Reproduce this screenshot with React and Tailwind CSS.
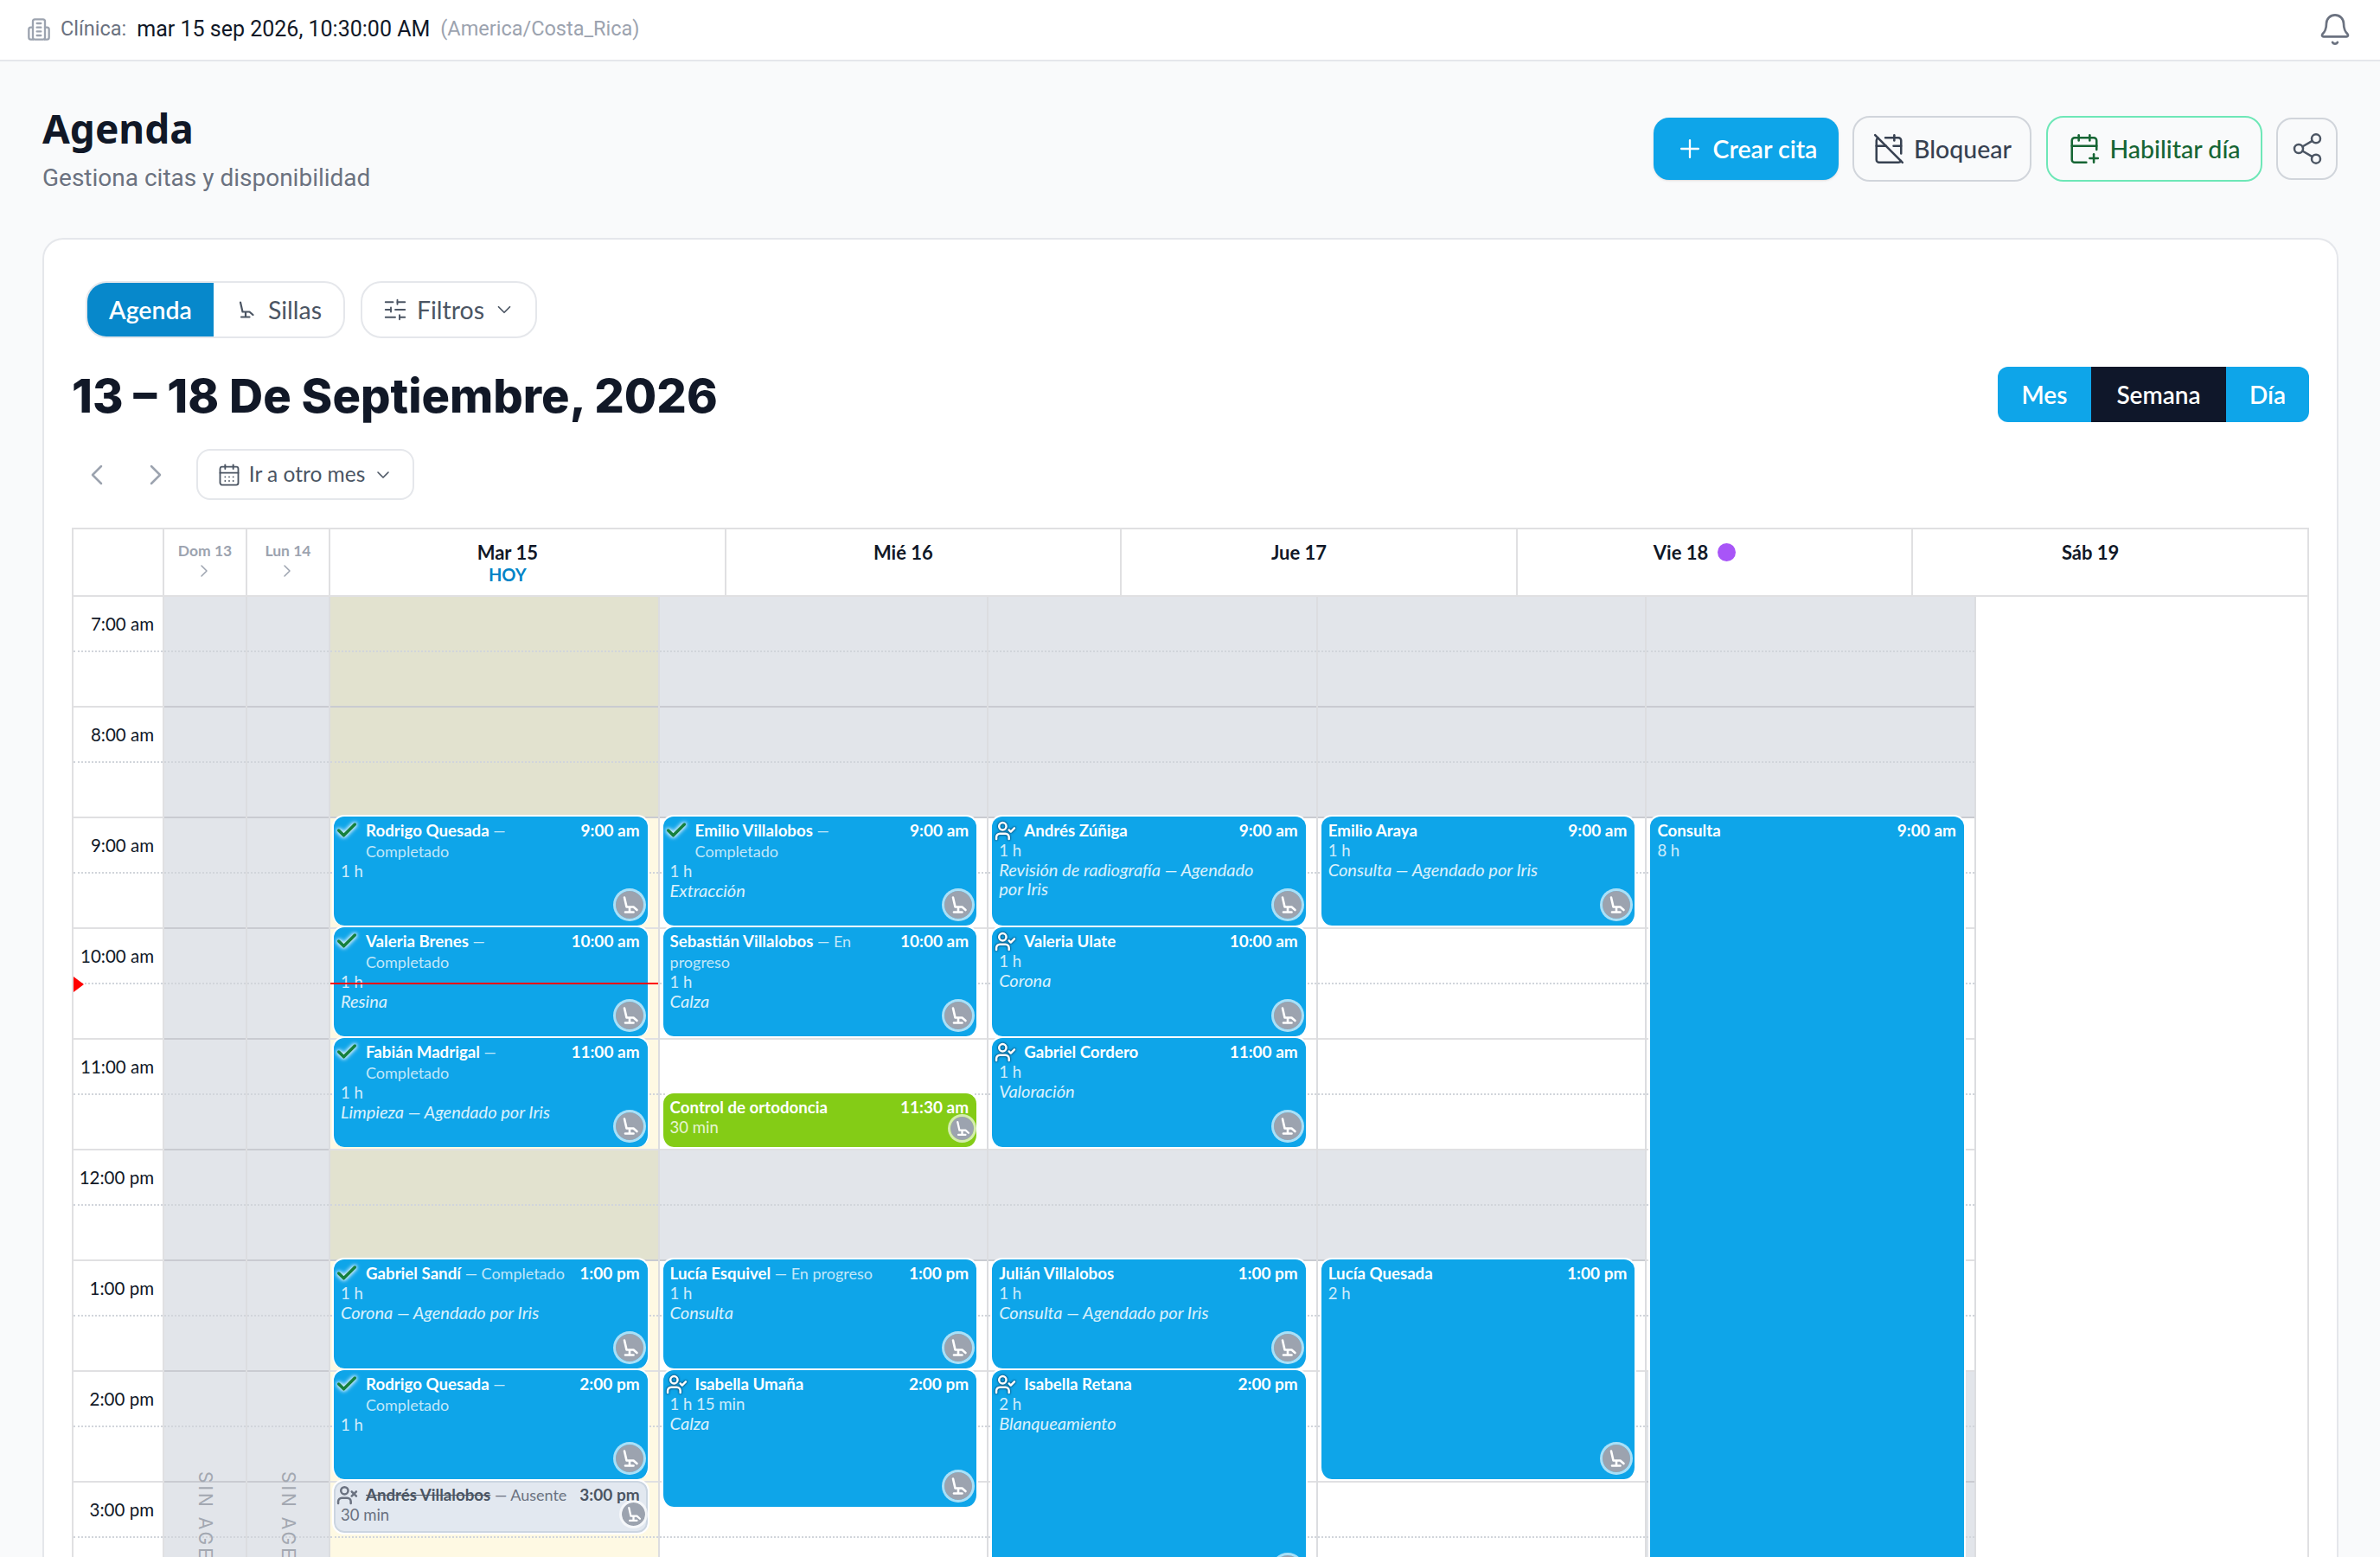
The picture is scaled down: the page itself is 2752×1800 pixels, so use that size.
import React from "react";
import { Bell, Plus, CalendarOff, CalendarPlus, Share2, SlidersHorizontal, ChevronDown, ChevronLeft, ChevronRight, CalendarDays, Check, UserCheck, UserX } from "lucide-react";

const ChairIcon = ({ className, strokeWidth = 2.2 }) => (
  <svg viewBox="0 0 24 24" fill="none" stroke="currentColor" strokeWidth={strokeWidth} strokeLinecap="round" strokeLinejoin="round" className={className}>
    <path d="M6 3.5 8.5 14.5H16.5L20.5 18" />
    <path d="M12 15V20" />
    <path d="M7 20.5H16.5" />
  </svg>
);

const BuildingIcon = ({ className }) => (
  <svg viewBox="0 0 24 24" fill="none" stroke="currentColor" strokeWidth="2" strokeLinecap="round" strokeLinejoin="round" className={className}>
    <rect x="6" y="2" width="12" height="20" rx="2" />
    <path d="M6 10H4a2 2 0 0 0-2 2v8a2 2 0 0 0 2 2h2" />
    <path d="M18 10h2a2 2 0 0 1 2 2v8a2 2 0 0 1-2 2h-2" />
    <path d="M10 6h4M10 10h4M10 14h4M10 18h4" />
  </svg>
);

const HOUR = 128;
const hours = ["7:00 am", "8:00 am", "9:00 am", "10:00 am", "11:00 am", "12:00 pm", "1:00 pm", "2:00 pm", "3:00 pm", "4:00 pm"];

const days = [
  {
    closed: [0, 1, 5],
    closedBg: "bg-[#e2e2cf]",
    openBg: "bg-[#fef9e3]",
    events: [
      { at: 2, len: 1, name: "Rodrigo Quesada", status: "Completado", time: "9:00 am", dur: "1 h", icon: "check" },
      { at: 3, len: 1, name: "Valeria Brenes", status: "Completado", time: "10:00 am", dur: "1 h", note: "Resina", icon: "check" },
      { at: 4, len: 1, name: "Fabián Madrigal", status: "Completado", time: "11:00 am", dur: "1 h", note: "Limpieza — Agendado por Iris", icon: "check" },
      { at: 6, len: 1, name: "Gabriel Sandí", status: "Completado", time: "1:00 pm", dur: "1 h", note: "Corona — Agendado por Iris", icon: "check" },
      { at: 7, len: 1, name: "Rodrigo Quesada", status: "Completado", time: "2:00 pm", dur: "1 h", icon: "check" },
      { at: 8, len: 0.5, name: "Andrés Villalobos", status: "Ausente", time: "3:00 pm", dur: "30 min", icon: "absent", kind: "absent", small: true },
    ],
  },
  {
    closed: [0, 1, 5],
    events: [
      { at: 2, len: 1, name: "Emilio Villalobos", status: "Completado", time: "9:00 am", dur: "1 h", note: "Extracción", icon: "check" },
      { at: 3, len: 1, name: "Sebastián Villalobos", status: "En progreso", time: "10:00 am", dur: "1 h", note: "Calza" },
      { at: 4.5, len: 0.5, name: "Control de ortodoncia", time: "11:30 am", dur: "30 min", kind: "green", small: true },
      { at: 6, len: 1, name: "Lucía Esquivel", status: "En progreso", time: "1:00 pm", dur: "1 h", note: "Consulta" },
      { at: 7, len: 1.25, name: "Isabella Umaña", time: "2:00 pm", dur: "1 h 15 min", note: "Calza", icon: "user" },
    ],
  },
  {
    closed: [0, 1, 5],
    events: [
      { at: 2, len: 1, name: "Andrés Zúñiga", time: "9:00 am", dur: "1 h", note: "Revisión de radiografía — Agendado por Iris", icon: "user" },
      { at: 3, len: 1, name: "Valeria Ulate", time: "10:00 am", dur: "1 h", note: "Corona", icon: "user" },
      { at: 4, len: 1, name: "Gabriel Cordero", time: "11:00 am", dur: "1 h", note: "Valoración", icon: "user" },
      { at: 6, len: 1, name: "Julián Villalobos", time: "1:00 pm", dur: "1 h", note: "Consulta — Agendado por Iris" },
      { at: 7, len: 2, name: "Isabella Retana", time: "2:00 pm", dur: "2 h", note: "Blanqueamiento", icon: "user" },
    ],
  },
  {
    closed: [0, 1, 5],
    events: [
      { at: 2, len: 1, name: "Emilio Araya", time: "9:00 am", dur: "1 h", note: "Consulta — Agendado por Iris" },
      { at: 6, len: 2, name: "Lucía Quesada", time: "1:00 pm", dur: "2 h" },
    ],
  },
  {
    closed: [0, 1, 7, 8, 9],
    events: [{ at: 2, len: 8, name: "Consulta", time: "9:00 am", dur: "8 h", noChair: true }],
  },
];

function HourCell({ closed, closedBg = "bg-[#e2e5ea]", openBg = "bg-white" }) {
  const lineHour = closed ? "border-[#c9cbd1]" : "border-[#e0e0e2]";
  return (
    <div className={`h-[128px] border-b-2 ${lineHour} ${closed ? closedBg : openBg}`}>
      <div className="h-[64px] border-b-2 border-dotted border-[#d1d5db]" />
    </div>
  );
}

function EventCard({ e }) {
  const top = e.at * HOUR - 4;
  const height = e.len * HOUR;
  const isAbsent = e.kind === "absent";
  const bg = e.kind === "green" ? "bg-[#84cc16]" : isAbsent ? "bg-[#e2e8f0]" : "bg-[#0ea5e9]";
  return (
    <div
      className={`absolute left-[2px] right-[10px] z-10 rounded-[14px] border-x-2 border-t-2 border-white pl-[8px] pr-[9px] pt-[4px] text-[18.5px] leading-[22px] ${bg} ${isAbsent ? "border-b-2 shadow-[inset_0_0_0_2px_#cbd5e1] text-[#6b7280]" : "text-white"}`}
      style={{ top, height }}
    >
      <div className="flex items-start">
        {e.icon === "check" && (
          <span className="-ml-[4px] mr-[11px] h-[22px] w-[22px] shrink-0">
            <Check className="-ml-[3px] -mt-[2px] h-[28px] w-[28px] text-[#15803d] [filter:drop-shadow(0_0_2px_#e0f2fe)_drop-shadow(0_0_2px_#e0f2fe)]" strokeWidth={3} />
          </span>
        )}
        {e.icon === "user" && (
          <span className="-ml-[4px] mr-[11px] h-[22px] w-[22px] shrink-0">
            <UserCheck className="-ml-[1px] h-[25px] w-[25px] text-white [filter:drop-shadow(0_0_1px_#0c4a6e)_drop-shadow(0_0_1px_#0369a1)]" strokeWidth={2.4} />
          </span>
        )}
        {e.icon === "absent" && (
          <span className="-ml-[4px] mr-[11px] h-[22px] w-[22px] shrink-0">
            <UserX className="-ml-[1px] h-[25px] w-[25px] text-[#6b7280]" strokeWidth={2.4} />
          </span>
        )}
        <div className="min-w-0 flex-1 text-[18.7px] leading-[24px]">
          <span className={`font-bold ${isAbsent ? "text-[#4b5563] line-through" : "text-white"}`}>{e.name}</span>
          {e.status && <span className={`text-[18px] ${isAbsent ? "text-[#6b7280]" : "text-white/75"}`}> — {e.status}</span>}
        </div>
        <div className={`ml-2 shrink-0 text-[19px] font-bold leading-[24px] ${isAbsent ? "text-[#4b5563]" : "text-white"}`}>{e.time}</div>
      </div>
      <div className={isAbsent ? "text-[#6b7280]" : "text-white/80"}>{e.dur}</div>
      {e.note && <div className="pr-[24px] text-[20px] italic text-white/85">{e.note}</div>}
      {!e.noChair && (
        <div className={`absolute flex items-center justify-center rounded-full border-[3px] border-white/65 bg-[#9ca3af] bg-clip-padding text-white ${e.small ? "bottom-[5px] right-[0px] h-[33px] w-[33px]" : "bottom-[5px] right-[2px] h-[38px] w-[38px]"}`}>
          <ChairIcon strokeWidth={2.6} className={e.small ? "h-[21px] w-[21px]" : "h-[24px] w-[24px]"} />
        </div>
      )}
    </div>
  );
}

function DayColumn({ day, children }) {
  return (
    <div className="relative w-[380.6px] border-r-2 border-[#dcdde0]">
      {hours.map((h, i) => (
        <HourCell key={h} closed={day.closed.includes(i)} closedBg={day.closedBg} openBg={day.openBg} />
      ))}
      {day.events.map((e) => (
        <EventCard key={e.name + e.time} e={e} />
      ))}
      {children}
    </div>
  );
}

function SideColumn({ label }) {
  return (
    <div className="relative w-[96px] border-r-2 border-[#dcdde0]">
      {hours.map((h) => (
        <HourCell key={h} closed />
      ))}
      <div className="absolute left-0 right-0 top-[1011px] flex justify-center">
        <span className="font-['Inter'] text-[21px] leading-none tracking-[3px] text-[#a3a8b1] [writing-mode:vertical-rl]">{label}</span>
      </div>
    </div>
  );
}

function HeaderDay({ label, sub, dot }) {
  return (
    <div className="flex flex-1 flex-col items-center border-r-2 border-[#e0e0e2] pr-[46px] pt-[13px] last:border-r-0">
      <div className="flex items-center text-[22px] font-bold leading-[27px] text-[#111827]">
        {label}
        {dot && <span className="ml-[11px] h-[21px] w-[21px] rounded-full bg-[#a855f7]" />}
      </div>
      {sub && <div className="text-[20px] font-bold leading-[25px] text-[#0284c7]">{sub}</div>}
    </div>
  );
}

function SideHeader({ label }) {
  return (
    <div className="flex w-[96px] flex-col items-center border-r-2 border-[#e0e0e2] pt-[14px] text-[#9ca3af]">
      <div className="text-[17.5px] font-bold leading-[22px]">{label}</div>
      <ChevronRight className="-ml-[3px] h-[24px] w-[24px]" strokeWidth={1.5} />
    </div>
  );
}

export default function App() {
  return (
    <div className="flex h-screen flex-col overflow-hidden bg-[#f9fafb] font-['Lato',sans-serif] text-[#111827]">
      <header className="flex h-[71px] shrink-0 items-center justify-between border-b-2 border-[#e5e7eb] bg-white pb-[2px] pl-[31px] pr-[32px] font-['Roboto',sans-serif]">
        <div className="flex items-center">
          <BuildingIcon className="mr-[11px] h-[28px] w-[28px] text-[#9ca3af]" />
          <span className="text-[23.5px] text-[#6b7280]">Clínica:</span>
          <span className="ml-[12px] text-[25px] text-[#111827]">mar 15 sep 2026, 10:30:00 AM</span>
          <span className="ml-[12px] text-[23.5px] text-[#9ca3af]">(America/Costa_Rica)</span>
        </div>
        <Bell className="h-[40px] w-[40px] text-[#6b7280]" strokeWidth={1.6} />
      </header>

      <main className="flex min-h-0 flex-1 flex-col pl-[49px] pr-[48px] pt-[49px]">
        <div className="mb-[49px] flex h-[106px] shrink-0 items-start justify-between">
          <div>
            <h1 className="font-['Noto_Sans',sans-serif] text-[46px] font-bold leading-[56px] text-[#111827]">Agenda</h1>
            <p className="mt-[12px] font-['Roboto',sans-serif] text-[28px] leading-[36px] text-[#6b7280]">Gestiona citas y disponibilidad</p>
          </div>
          <div className="mr-[1px] mt-[14px] flex items-center text-[28.5px] font-medium">
            <button className="flex h-[72px] w-[214px] items-center justify-center gap-[10px] rounded-[18px] bg-[#0ea5e9] font-semibold text-white shadow-sm">
              <Plus className="h-[34px] w-[34px]" strokeWidth={1.6} />
              Crear cita
            </button>
            <button className="ml-[16px] flex h-[76px] w-[207px] items-center justify-center gap-[10px] rounded-[20px] border-2 border-[#d1d5db] text-[#374151]">
              <CalendarOff className="h-[38px] w-[38px]" strokeWidth={1.6} />
              Bloquear
            </button>
            <button className="ml-[17px] flex h-[76px] w-[250px] items-center justify-center gap-[10px] rounded-[20px] border-2 border-[#6ee7b7] text-[#166534]">
              <CalendarPlus className="h-[38px] w-[38px]" strokeWidth={1.6} />
              Habilitar día
            </button>
            <button className="ml-[16px] flex h-[72px] w-[71px] items-center justify-center rounded-[18px] border-2 border-[#d1d5db] text-[#4b5563]">
              <Share2 className="h-[40px] w-[40px]" strokeWidth={1.5} />
            </button>
          </div>
        </div>

        <section className="min-h-0 flex-1 rounded-t-[24px] border-x-2 border-t-2 border-[#e5e7eb] bg-white px-[32px] pt-[48px]">
          <div className="ml-[16px] flex h-[66px] items-stretch gap-[18px] text-[28.5px]">
            <div className="flex w-[300px] overflow-hidden rounded-[24px] border-2 border-[#e5e7eb]">
              <div className="flex w-[146px] items-center justify-center bg-[#0788cb] font-semibold text-white">Agenda</div>
              <div className="flex flex-1 items-center justify-center gap-[14px] text-[#4b5563]">
                <ChairIcon className="h-[24px] w-[24px] text-[#4b5563]" />
                Sillas
              </div>
            </div>
            <div className="flex w-[204px] items-center justify-center gap-[10px] rounded-[24px] border-2 border-[#e5e7eb] text-[#4b5563]">
              <SlidersHorizontal className="h-[30px] w-[30px]" strokeWidth={1.5} />
              Filtros
              <ChevronDown className="h-[26px] w-[26px]" strokeWidth={1.6} />
            </div>
          </div>

          <div className="mt-[33px] flex h-[64px] items-center justify-between">
            <h2 className="pt-[2px] font-['Inter',sans-serif] text-[54.2px] font-extrabold leading-[64px] text-[#111827]">13 – 18 De Septiembre, 2026</h2>
            <div className="flex h-[64px] overflow-hidden rounded-[12px] text-[28px] font-semibold text-white">
              <div className="flex w-[108px] items-center justify-center bg-[#0ea5e9]">Mes</div>
              <div className="flex w-[156px] items-center justify-center bg-[#0f172a]">Semana</div>
              <div className="flex w-[96px] items-center justify-center bg-[#0ea5e9]">Día</div>
            </div>
          </div>

          <div className="mt-[31px] flex h-[59px] items-center">
            <ChevronLeft className="ml-[9px] h-[40px] w-[40px] text-[#9ca3af]" strokeWidth={1.5} />
            <ChevronRight className="ml-[28px] h-[40px] w-[40px] text-[#9ca3af]" strokeWidth={1.5} />
            <div className="ml-[27px] flex h-[59px] w-[252px] items-center justify-center gap-[9px] rounded-[16px] border-2 border-[#e5e7eb] text-[24.5px] text-[#4b5563]">
              <CalendarDays className="h-[28px] w-[28px]" strokeWidth={1.6} />
              Ir a otro mes
              <ChevronDown className="h-[24px] w-[24px]" strokeWidth={1.6} />
            </div>
          </div>

          <div className="mt-[32px] w-[2587px] border-x-2 border-t-2 border-[#e0e0e2] bg-white">
            <div className="flex h-[78px] border-b-2 border-[#e0e0e2]">
              <div className="w-[105px] border-r-2 border-[#e0e0e2]" />
              <SideHeader label="Dom 13" />
              <SideHeader label="Lun 14" />
              <HeaderDay label="Mar 15" sub="HOY" />
              <HeaderDay label="Mié 16" />
              <HeaderDay label="Jue 17" />
              <HeaderDay label="Vie 18" dot />
              <HeaderDay label="Sáb 19" />
            </div>
            <div className="flex">
              <div className="relative w-[105px] border-r-2 border-[#e0e0e2]">
                {hours.map((h) => (
                  <div key={h} className="h-[128px] border-b-2 border-[#e0e0e2] pr-[10px] pt-[17px] text-right text-[20.5px] leading-[28px] text-[#111827]">
                    {h}
                    <div className="relative -mr-[10px] mt-[17px] h-[2px] border-b-2 border-dotted border-[#d1d5db]" />
                  </div>
                ))}
                <div className="absolute left-0 top-[439px] h-0 w-0 border-y-[9px] border-l-[12px] border-y-transparent border-l-[#ff0000]" />
              </div>
              <SideColumn label="SIN AGENDA" />
              <SideColumn label="SIN AGENDA" />
              <DayColumn day={days[0]}>
                <div className="absolute left-0 right-0 top-[446px] z-20 h-[2px] bg-[#ff0000]" />
              </DayColumn>
              <DayColumn day={days[1]} />
              <DayColumn day={days[2]} />
              <DayColumn day={days[3]} />
              <DayColumn day={days[4]} />
            </div>
          </div>
        </section>
      </main>
    </div>
  );
}
